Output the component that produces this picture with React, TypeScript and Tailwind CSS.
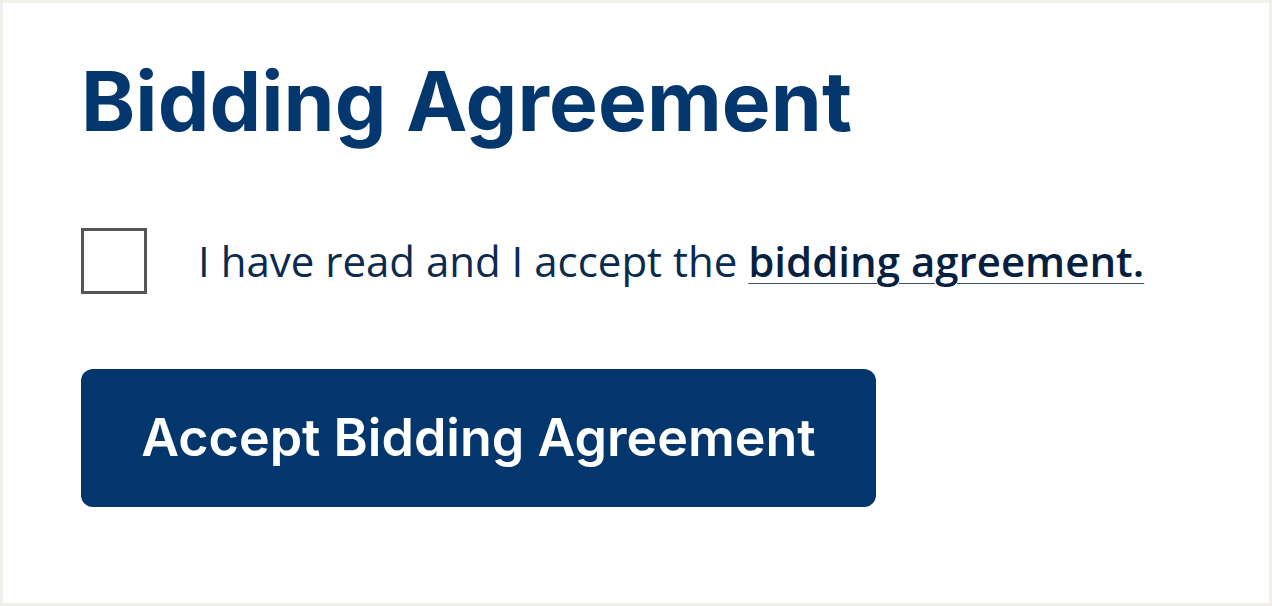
import { useState } from 'react'

export default function App() {
  const [accepted, setAccepted] = useState(false)

  return (
    <div className="min-h-screen w-full bg-[#f1efea] p-[3px]">
      <div className="h-[600px] bg-white pl-[78px] pt-[58px]">
        <h1 className="font-['Inter',sans-serif] text-[82px] font-bold leading-none tracking-[0.1px] text-[#04376e]">
          Bidding Agreement
        </h1>

        <label className="mt-[85px] flex cursor-pointer items-center">
          <input
            type="checkbox"
            checked={accepted}
            onChange={(e) => setAccepted(e.target.checked)}
            className="peer sr-only"
          />
          <span className="h-[66px] w-[66px] shrink-0 border-[3px] border-[#555555] bg-white" />
          <span className="ml-[51px] font-['Open_Sans',sans-serif] text-[42px] leading-none text-[#0a2a50]">
            I have read and I accept the{' '}
            <a
              href="#"
              className="font-semibold text-[#071f40] underline decoration-[#3d5270] decoration-1 underline-offset-[6px]"
            >
              bidding agreement.
            </a>
          </span>
        </label>

        <button
          type="button"
          disabled={!accepted}
          className="mt-[75px] flex h-[138px] w-[795px] items-center justify-center rounded-[12px] bg-[#03366d] font-['Inter',sans-serif] text-[52px] font-semibold text-white"
        >
          Accept Bidding Agreement
        </button>
      </div>
    </div>
  )
}
